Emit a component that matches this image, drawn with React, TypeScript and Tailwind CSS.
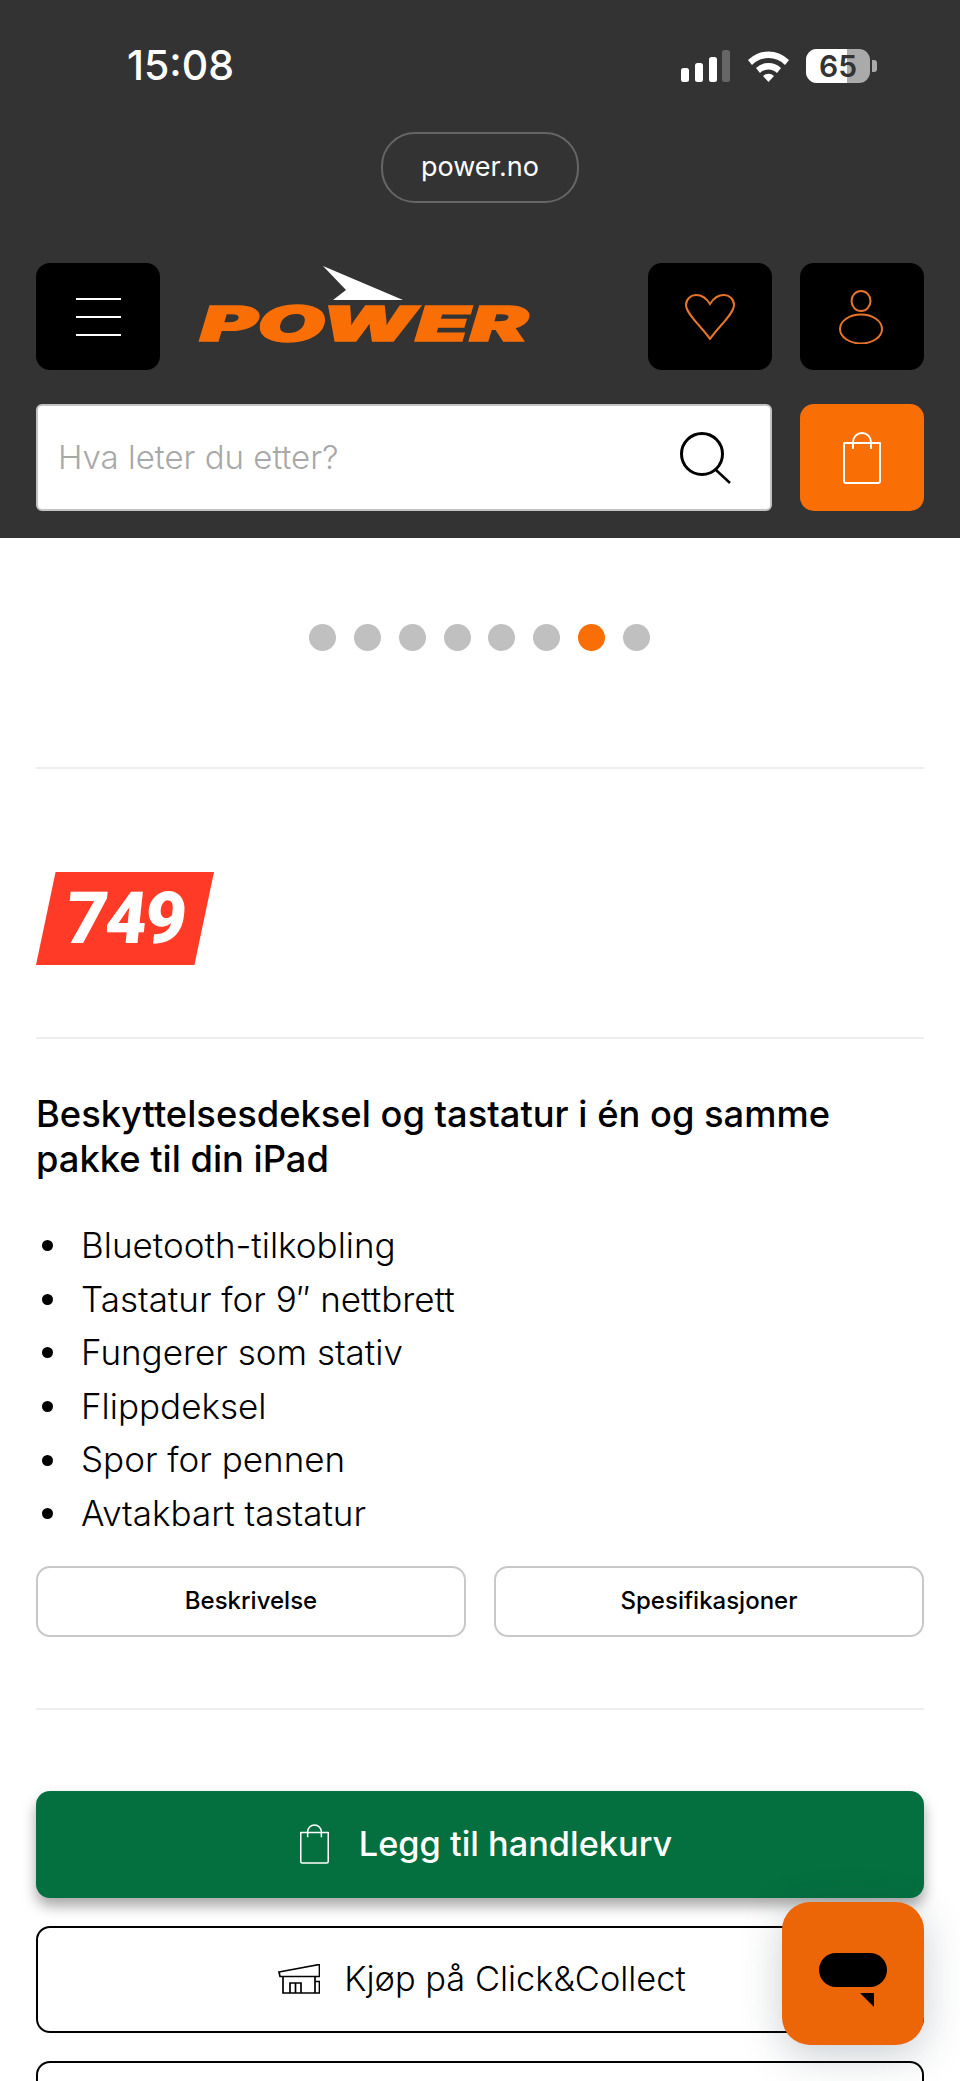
const features = [
  "Bluetooth-tilkobling",
  "Tastatur for 9″ nettbrett",
  "Fungerer som stativ",
  "Flippdeksel",
  "Spor for pennen",
  "Avtakbart tastatur",
];

const dots = [0, 1, 2, 3, 4, 5, 6, 7];

const BagIcon = ({ className }: { className: string }) => (
  <svg viewBox="0 0 38 52" fill="none" stroke="currentColor" strokeWidth="2" className={className}>
    <path d="M1 11h36v38a2 2 0 0 1-2 2H3a2 2 0 0 1-2-2z" strokeLinejoin="round" />
    <path d="M10 17V10a9 9 0 0 1 18 0v7" />
  </svg>
);

const StatusIcons = () => (
  <div className="flex items-center">
    <svg viewBox="0 0 50 32" className="w-[50px] h-[32px]">
      <rect x="0" y="18" width="8" height="14" rx="2.5" fill="#fff" />
      <rect x="14" y="13" width="8" height="19" rx="2.5" fill="#fff" />
      <rect x="28" y="7" width="8" height="25" rx="2.5" fill="#fff" />
      <rect x="41" y="0" width="8" height="32" rx="2.5" fill="#666" />
    </svg>
    <svg viewBox="0 0 43 32" className="w-[43px] h-[32px] ml-[16px]">
      <path d="M1 10a29 29 0 0 1 41 0l-4 5a23 23 0 0 0-33 0z" fill="#fff" />
      <path d="M9 18a18 18 0 0 1 25 0l-4 5a12 12 0 0 0-17 0z" fill="#fff" />
      <path d="M16 26a8 8 0 0 1 11 0l-5.500 6z" fill="#fff" />
    </svg>
    <div className="relative ml-[16px] w-[64px] h-[34px] rounded-[11px] overflow-hidden bg-[#aaaaaa]">
      <div className="w-[41px] h-full bg-white" />
      <span className="absolute inset-0 flex items-center justify-center text-[30px] leading-none font-semibold text-[#333333]">
        65
      </span>
    </div>
    <div className="ml-[2px] w-[5px] h-[12px] rounded-r-[3px] bg-[#aaaaaa]" />
  </div>
);

const Logo = () => (
  <svg viewBox="0 0 336 84" className="self-start w-[336px] h-[84px] mt-[2px] ml-[38px] overflow-visible">
    <path d="M125 1 205 35 135 35 148 25z" fill="#fff" />
    <text
      x="2"
      y="76"
      textLength="328"
      lengthAdjust="spacingAndGlyphs"
      fontFamily="Inter, sans-serif"
      fontWeight="900"
      fontStyle="italic"
      fontSize="48"
      fill="#f96f06"
      stroke="#f96f06"
      strokeWidth="1.5"
    >
      POWER
    </text>
  </svg>
);

const App = () => {
  return (
    <div className="relative h-[2081px] overflow-hidden bg-white font-[Inter,sans-serif] text-black">
      <header className="h-[538px] bg-[#333333] px-[36px]">
        <div className="flex items-center justify-between pt-[47px] pl-[91px] pr-[47px] h-[84px]">
          <span className="text-[41px] leading-none font-medium text-white">15:08</span>
          <StatusIcons />
        </div>
        <div className="flex justify-center mt-[48px]">
          <div className="flex items-center justify-center w-[198px] h-[71px] rounded-[34px] border-2 border-[#666666] text-[27px] text-white">
            power.no
          </div>
        </div>
        <div className="flex items-center mt-[60px]">
          <button className="flex flex-col items-center justify-center gap-[16px] w-[124px] h-[107px] rounded-[14px] bg-black">
            <span className="w-[45px] h-[2px] bg-white" />
            <span className="w-[45px] h-[2px] bg-white" />
            <span className="w-[45px] h-[2px] bg-white" />
          </button>
          <Logo />
          <button className="flex items-center justify-center w-[124px] h-[107px] ml-auto rounded-[14px] bg-black">
            <svg viewBox="0 0 50 46" fill="none" stroke="#e8742a" strokeWidth="2" className="w-[50px] h-[46px]">
              <path d="M25 45C17 33 1 20 1 11 1 5 6 1 11 1c6 0 11 4 14 9 3-5 8-9 14-9 5 0 10 4 10 10 0 9-16 22-24 34z" />
            </svg>
          </button>
          <button className="flex items-center justify-center w-[124px] h-[107px] ml-[28px] rounded-[14px] bg-black">
            <svg viewBox="0 0 44 54" fill="none" stroke="#e8742a" strokeWidth="2" className="w-[44px] h-[54px] mr-[2px]">
              <ellipse cx="22" cy="11" rx="9.500" ry="10" />
              <ellipse cx="22" cy="39" rx="21" ry="14.500" />
            </svg>
          </button>
        </div>
        <div className="flex items-center mt-[34px] gap-[28px]">
          <div className="flex items-center justify-between w-[736px] h-[107px] rounded-[6px] border-2 border-[#c4c4c4] bg-white pl-[20px] pr-[38px]">
            <span className="text-[33px] font-light text-[#a8a8a8]">Hva leter du etter?</span>
            <svg viewBox="0 0 52 52" fill="none" stroke="#000" className="w-[52px] h-[52px]">
              <circle cx="22" cy="22" r="20.500" strokeWidth="3" />
              <path d="M36 38 50 51" strokeWidth="2.500" />
            </svg>
          </div>
          <button className="flex items-center justify-center w-[124px] h-[107px] rounded-[14px] bg-[#f96f06] text-white">
            <BagIcon className="w-[38px] h-[52px]" />
          </button>
        </div>
      </header>

      <main className="px-[36px]">
        <div className="flex justify-center gap-[17.800px] pt-[86px] pr-[1px]">
          {dots.map((dot) => (
            <span
              key={dot}
              className={dot === 6 ? "w-[27px] h-[27px] rounded-full bg-[#f96f06]" : "w-[27px] h-[27px] rounded-full bg-[#c0c0c0]"}
            />
          ))}
        </div>
        <hr className="mt-[116px] border-t-2 border-[#eeeeee]" />

        <div className="flex items-center justify-center w-[178px] h-[93px] mt-[103px] bg-[#ff3b27] [clip-path:polygon(11%_0,100%_0,89%_100%,0_100%)]">
          <span className="inline-block -skew-x-6 font-[Roboto,sans-serif] text-[72px] leading-none font-black tracking-[-0.03em] text-white">749</span>
        </div>
        <hr className="mt-[72px] border-t-2 border-[#eeeeee]" />

        <h1 className="mt-[53px] text-[36.300px] leading-[45px] font-medium">
          Beskyttelsesdeksel og tastatur i én og samme pakke til din iPad
        </h1>
        <ul className="mt-[37px] text-[35px] leading-[53.600px] font-light">
          {features.map((feature) => (
            <li key={feature} className="flex items-center">
              <span className="w-[11px] h-[11px] ml-[6px] mr-[28px] rounded-full bg-black" />
              {feature}
            </li>
          ))}
        </ul>

        <div className="grid grid-cols-2 gap-[28px] mt-[25px]">
          <button className="h-[71px] rounded-[14px] border-2 border-[#c8c8c8] text-[24px] font-medium">Beskrivelse</button>
          <button className="h-[71px] rounded-[14px] border-2 border-[#c8c8c8] text-[24px] font-medium">Spesifikasjoner</button>
        </div>
        <hr className="mt-[71px] border-t-2 border-[#eeeeee]" />

        <button className="flex items-center justify-center gap-[30px] w-full h-[107px] mt-[81px] pl-[12px] rounded-[14px] bg-[#046f3f] text-[34.300px] font-medium text-white shadow-[0_8px_14px_rgba(0,0,0,0.35)]">
          <BagIcon className="w-[29px] h-[40px]" />
          Legg til handlekurv
        </button>
        <button className="flex items-center justify-center gap-[24px] w-full h-[107px] mt-[28px] pl-[4px] rounded-[14px] border-2 border-black text-[34.400px] font-light">
          <svg viewBox="0 0 42 30" fill="none" stroke="#000" strokeWidth="1.700" className="w-[42px] h-[30px]">
            <path d="M1 8 41.500.5v12H2z" />
            <path d="M5 12.500V29h36.500V17.500H37V29M37 12.500v5M12 29V19h11v10M17.500 19v10" />
          </svg>
          Kjøp på Click&amp;Collect
        </button>
        <div className="h-[106px] mt-[28px] rounded-[14px] border-2 border-black" />
      </main>

      {/* chat launcher sits over the buttons */}
      <button className="absolute left-[782px] top-[1902px] flex flex-col items-center justify-center w-[142px] h-[143px] pt-[13px] rounded-[28px] bg-[#ec6608] shadow-[0_10px_40px_rgba(40,60,70,0.25)]">
        <svg viewBox="0 0 68 54" className="w-[68px] h-[54px]">
          <rect x="0" y="0" width="68" height="34" rx="17" fill="#000" />
          <path d="M41 40H55V54z" fill="#000" />
        </svg>
      </button>
    </div>
  );
};

export default App;
